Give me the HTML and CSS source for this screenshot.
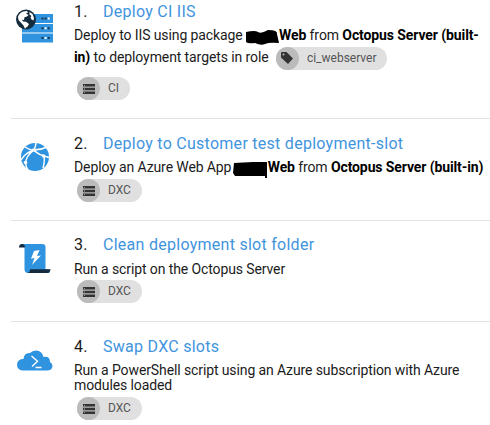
FILE: index.html
```html
<!DOCTYPE html>
<html lang="en">
<head>
<meta charset="utf-8">
<title>Deployment process</title>
<link rel="stylesheet" href="styles.css">
</head>
<body>
<svg class="defs" width="0" height="0">
  <symbol id="list" viewBox="0 0 12 10"><path d="M0 0h12v2.600H0zM0 3.700h12v2.600H0zM0 7.400h12V10H0z" fill="#333"/><path d="M1 .9h1v.9H1zM1 4.600h1v.9H1zM1 8.200h1v.9H1z" fill="#bbb"/></symbol>
</svg>
<ol class="steps">
  <li class="step step-iis">
    <svg class="icon" viewBox="0 0 38 38">
      <path fill="#2f93e0" d="M6 5h31v9H6zM6 15h31v8.500H6zM6 24.500h31v9H6z"/>
      <path fill="#17324a" d="M25.500 8.500h2v2h-2zM28.600 8.500h2v2h-2zM25.500 18.200h2v2h-2zM31.700 18.200h2v2h-2zM25.500 28h2v2h-2zM31.700 28h2v2h-2z"/>
      <path fill="#fff" d="M31.700 8.500h2v2h-2zM28.600 18.200h2v2h-2zM28.600 28h2v2h-2z"/>
      <circle cx="10" cy="10.500" r="10" fill="#142b3e"/>
      <path fill="#fff" d="M2 8Q3 4 7 2.500L11 2l1 1.500-2 1L12.500 6 11 7.500l-2.500.7L8 11l-2-.3L7 12.500l3 .2 3 2.300-1.200 2.300-2 1.500-.8 1-1.500-3.300-2.500-2.700L2.500 11zM13.500 3l3 2 1.500 4-.5 2.500-2-1-1-2.200 1-1.300-2-1.500z"/>
    </svg>
    <div class="body">
      <h2 class="title"><span class="num">1.</span><a>Deploy CI IIS</a></h2>
      <p class="desc roomy"><span class="line l1">Deploy to IIS using package <svg class="redact" viewBox="0 0 33 16"><path d="M0 2Q9 0 12 2T22 0Q32 0 31 4L33 13Q23 12 19 14T9 13Q2 14 0 12z"/></svg><b>Web</b> from <b>Octopus Server (built-</b></span>
      <span class="line l2"><b>in)</b> to deployment targets in role <span class="chip tag"><i class="dot"><svg width="12" height="12" viewBox="0 0 12 12"><path fill="#333" d="M1 0h4.500L12 6.500 7 12 0 5.500V1q0-1 1-1"/><circle cx="2.500" cy="2.500" r="1" fill="#bbb"/></svg></i><span>ci_webserver</span></span></span></p>
      <span class="chip ci"><i class="dot"><svg width="12" height="10"><use href="#list"/></svg></i><span>CI</span></span>
    </div>
  </li>
  <li class="step">
    <svg class="icon" viewBox="0 0 38 38">
      <circle cx="19" cy="18" r="14" fill="#2f93e0"/>
      <g fill="none" stroke="#fff" stroke-width="1.500"><path d="M9 8Q13 11 18 11M18 11Q20 7 20 3M18 11Q25 11 31 8M18 11Q22 16 33 18.500M18 11Q9 14 5 21M18 11Q10 17 9.500 24Q10 28 12 31M28 17Q29 22 27 29"/></g>
      <circle cx="18" cy="11" r="1.800" fill="#fff"/><circle cx="27.500" cy="17" r="1.700" fill="#fff"/><circle cx="9.500" cy="23.500" r="1.800" fill="#fff"/>
    </svg>
    <div class="body">
      <h2 class="title"><span class="num">2.</span><a>Deploy to Customer test deployment-slot</a></h2>
      <p class="desc"><span class="line l3">Deploy an Azure Web App <svg class="redact second" viewBox="0 0 35 16"><path d="M1 1L20 0H34V16H32V14H2L0 11z"/></svg><b>Web</b> from <b>Octopus Server (built-in)</b></span></p>
      <span class="chip"><i class="dot"><svg width="12" height="10"><use href="#list"/></svg></i><span>DXC</span></span>
    </div>
  </li>
  <li class="step step-script">
    <svg class="icon" viewBox="0 0 38 38">
      <path fill="#2f93e0" d="M5 4h21q3.500 0 3.500 3v22l4 1v3H12q-3.500 0-3.500-4V7z"/>
      <path fill="#142b3e" d="M3 7.500q0-3.500 3-3.500t3 3.500zM14 29.300h20.500q0 3.700-4 3.700H11.500q2.500-.4 2.500-3.700"/>
      <path fill="#fff" d="m18 11 5.500-1-2.500 6 4-.5L16 25l2.500-7-3.500.8z"/>
    </svg>
    <div class="body">
      <h2 class="title"><span class="num">3.</span><a>Clean deployment slot folder</a></h2>
      <p class="desc"><span class="line l4">Run a script on the Octopus Server</span></p>
      <span class="chip"><i class="dot"><svg width="12" height="10"><use href="#list"/></svg></i><span>DXC</span></span>
    </div>
  </li>
  <li class="step">
    <svg class="icon" viewBox="0 0 38 38">
      <path fill="#2f93e0" d="M6 28.500Q1 27.500 1 22.500 1.500 17 7.500 17 8 10.500 14 11 16 8.500 20 8.500 26 8.500 27.500 15 34 14 34 20 36.500 21.500 36.500 24 36 28.500 31 28.500z"/>
      <path fill="none" stroke="#fff" stroke-width="1.400" d="m15.500 14 6 5.300-5.500 5.200M19.500 25.500h6"/>
    </svg>
    <div class="body">
      <h2 class="title"><span class="num">4.</span><a>Swap DXC slots</a></h2>
      <p class="desc"><span class="line l5">Run a PowerShell script using an Azure subscription with Azure</span><span class="line l6">modules loaded</span></p>
      <span class="chip last"><i class="dot"><svg width="12" height="10"><use href="#list"/></svg></i><span>DXC</span></span>
    </div>
  </li>
</ol>
</body>
</html>
```
FILE: styles.css
```css
* { box-sizing: border-box; }
body { margin: 0; background: #fff; color: #1b1b1b; font-family: Roboto, sans-serif; overflow: hidden; }
.defs { display: none; }
.steps { list-style: none; margin: 0 0 0 11px; padding: 0; }
.step { display: flex; height: 101.500px; padding: 15px 0 0 5px; border-bottom: 1px solid #e2e2e2; }
.step-iis { height: 119px; padding-top: 2px; }
.step-script { padding-top: 14.500px; }
.step:last-child { border-bottom: 0; height: 104px; }
.icon { flex: none; width: 38px; height: 38px; margin: 5px 20px 0 0; }
.step-iis .icon { margin-top: 7px; }
.body { flex: 1; min-width: 0; }
.title { display: flex; margin: 0; font-size: 16px; line-height: 20px; font-weight: 400; letter-spacing: .27px; }
.num { width: 29px; }
.title a { color: #3f94de; }
.desc { margin: 6px 0 0; font-size: 14px; line-height: 15px; letter-spacing: -.11px; }
.step-script .desc { margin-top: 7px; }
.desc.roomy { line-height: 22px; margin-top: 2px; letter-spacing: -.1px; }
.desc b { font-weight: 700; color: #000; }
.line { display: block; white-space: nowrap; }
.redact { width: 33px; height: 16px; vertical-align: -4px; margin: -2px 0; }
.redact.second { width: 35px; margin-left: -2px; }
.chip { display: flex; width: 65px; height: 23px; margin: 3px 0 0 3px; border-radius: 12px; background: #e0e0e0; color: #555; font-size: 12px; line-height: 23px; letter-spacing: -.1px; align-items: center; }
.chip.ci { width: 53px; margin-top: 9px; }
.chip.tag { display: inline-flex; width: 111px; margin: -2px 0 -2px 4px; vertical-align: middle; }
.tag > span { letter-spacing: 0; }
.chip.last { margin-top: 4px; }
.dot { display: flex; flex: none; width: 23px; height: 23px; margin-right: 8px; border-radius: 50%; background: #bbb; align-items: center; justify-content: center; }
```
